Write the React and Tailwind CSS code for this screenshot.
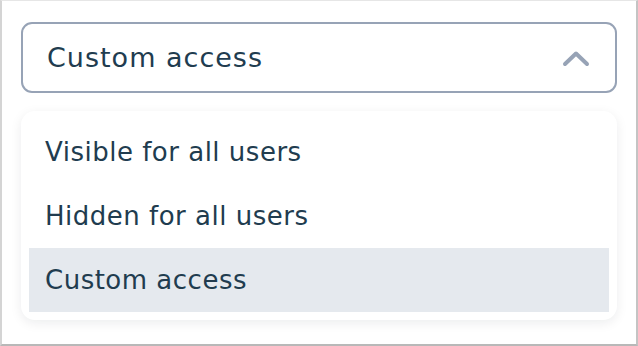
const OPTIONS = ["Visible for all users", "Hidden for all users", "Custom access"];

function Chevron() {
  return (
    <svg width="28" height="17" viewBox="0 0 28 17" fill="none" className="mt-[2px]">
      <polyline
        points="3,14 14,3.5 25,14"
        stroke="#97a3b6"
        strokeWidth="4"
        strokeLinecap="round"
        strokeLinejoin="round"
      />
    </svg>
  );
}

export default function App() {
  const selected = "Custom access";

  return (
    <div className="box-border h-[346px] w-[638px] border-l-2 border-t border-r-2 border-b-2 border-l-[#d4d4d4] border-t-[#e6e6e6] border-r-[#c4c4c4] border-b-[#b8b8b8] bg-white px-[19px] pt-[21px] font-['DejaVu_Sans',sans-serif] text-[#213c4f]">
      <button
        type="button"
        className="flex h-[71px] w-full items-center justify-between rounded-[11px] border-2 border-[#97a3b6] bg-white pl-[24px] pr-[25px] text-left text-[27px] tracking-[1px]"
      >
        <span className="mt-[1px]">{selected}</span>
        <Chevron />
      </button>

      <ul className="mt-[18px] rounded-[14px] bg-white px-[8px] pt-[9px] pb-[8px] shadow-[0_3px_12px_rgba(15,23,42,0.08)]">
        {OPTIONS.map((opt) => (
          <li
            key={opt}
            className={
              "flex h-16 items-center px-[16px] text-[26px] tracking-[0.5px] " +
              (opt === selected ? "bg-[#e5e9ee]" : "")
            }
          >
            {opt}
          </li>
        ))}
      </ul>
    </div>
  );
}
